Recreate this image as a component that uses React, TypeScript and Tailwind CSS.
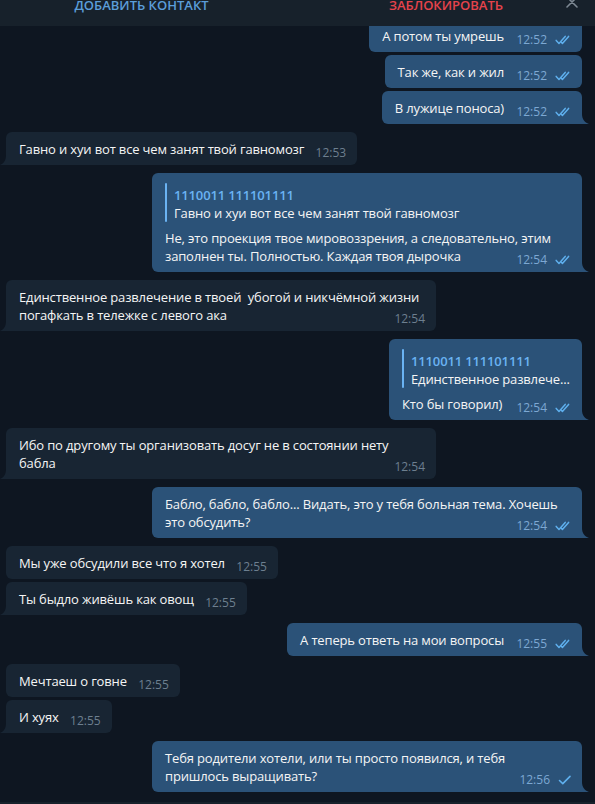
import React from "react";
import clsx from "clsx";

type Msg = {
  out: boolean;
  lines: string[];
  time: string;
  gap: string;
  tail?: boolean;
  width?: string;
  reply?: { name: string; text: string };
  single?: boolean;
};

const messages: Msg[] = [
  { out: true, lines: ["А потом ты умрешь"], time: "12:52", gap: "-mt-[7px]" },
  { out: true, lines: ["Так же, как и жил"], time: "12:52", gap: "mt-[3px]" },
  { out: true, lines: ["В лужице поноса)"], time: "12:52", gap: "mt-[3px]", tail: true },
  {
    out: false,
    lines: ["Гавно и хуи вот все чем занят твой гавномозг"],
    time: "12:53",
    gap: "mt-[8px]",
    tail: true,
  },
  {
    out: true,
    lines: [
      "Не, это проекция твое мировоззрения, а следовательно, этим",
      "заполнен ты. Полностью. Каждая твоя дырочка",
    ],
    time: "12:54",
    gap: "mt-[8px]",
    tail: true,
    width: "w-[430px]",
    reply: { name: "1110011 111101111", text: "Гавно и хуи вот все чем занят твой гавномозг" },
  },
  {
    out: false,
    lines: [
      "Единственное развлечение в твоей\u00a0 убогой и никчёмной жизни",
      "погафкать в тележке с левого ака",
    ],
    time: "12:54",
    gap: "mt-[8px]",
    tail: true,
    width: "w-[430px]",
  },
  {
    out: true,
    lines: ["Кто бы говорил)"],
    time: "12:54",
    gap: "mt-[8px]",
    tail: true,
    width: "w-[193px]",
    reply: { name: "1110011 111101111", text: "Единственное развлече..." },
  },
  {
    out: false,
    lines: ["Ибо по другому ты организовать досуг не в состоянии нету", "бабла"],
    time: "12:54",
    gap: "mt-[8px]",
    tail: true,
    width: "w-[430px]",
  },
  {
    out: true,
    lines: ["Бабло, бабло, бабло... Видать, это у тебя больная тема. Хочешь", "это обсудить?"],
    time: "12:54",
    gap: "mt-[8px]",
    tail: true,
    width: "w-[430px]",
  },
  { out: false, lines: ["Мы уже обсудили все что я хотел"], time: "12:55", gap: "mt-[8px]" },
  { out: false, lines: ["Ты быдло живёшь как овощ"], time: "12:55", gap: "mt-[3px]", tail: true },
  { out: true, lines: ["А теперь ответь на мои вопросы"], time: "12:55", gap: "mt-[8px]", tail: true },
  { out: false, lines: ["Мечтаеш о говне"], time: "12:55", gap: "mt-[8px]" },
  { out: false, lines: ["И хуях"], time: "12:55", gap: "mt-[3px]", tail: true },
  {
    out: true,
    lines: ["Тебя родители хотели, или ты просто появился, и тебя", "пришлось выращивать?"],
    time: "12:56",
    gap: "mt-[8px]",
    tail: true,
    width: "w-[430px]",
    single: true,
  },
];

function Checks({ single }: { single?: boolean }) {
  if (single) {
    return (
      <svg width="14" height="10" viewBox="0 0 14 10" fill="none">
        <path
          d="M1.5 5.5 L4.8 8.6 L12 1.4"
          stroke="#5fb0ee"
          strokeWidth="1.6"
          strokeLinecap="round"
          strokeLinejoin="round"
        />
      </svg>
    );
  }
  return (
    <svg width="17" height="10" viewBox="0 0 17 10" fill="none">
      <path
        d="M1.2 5.4 L4 8.4 L10.2 1.4"
        stroke="#5fb0ee"
        strokeWidth="1.5"
        strokeLinecap="round"
        strokeLinejoin="round"
      />
      <path
        d="M6.4 7.2 L7.4 8.4 L13.6 1.4"
        stroke="#5fb0ee"
        strokeWidth="1.5"
        strokeLinecap="round"
        strokeLinejoin="round"
      />
    </svg>
  );
}

function Tail({ out }: { out: boolean }) {
  if (out) {
    return (
      <svg
        className="absolute bottom-0 -right-[7px]"
        width="7"
        height="10"
        viewBox="0 0 7 10"
      >
        <path d="M0 0 C0 5 2.5 8.6 7 10 L0 10 Z" fill="#2b5278" />
      </svg>
    );
  }
  return (
    <svg className="absolute bottom-0 -left-[6px]" width="6" height="10" viewBox="0 0 6 10">
      <path d="M6 0 C6 5 4 8.6 0 10 L6 10 Z" fill="#182533" />
    </svg>
  );
}

function Bubble({ m }: { m: Msg }) {
  return (
    <div className={clsx("flex", m.out ? "justify-end pr-[13px]" : "justify-start pl-[6px]", m.gap)}>
      <div
        className={clsx(
          "relative pl-[13px] pr-[11px] pt-[8px] pb-[7px] text-[13px] leading-[18px] tracking-[-0.15px] text-[#f5f5f5]",
          m.out ? "bg-[#2b5278]" : "bg-[#182533]",
          m.tail
            ? m.out
              ? "rounded-[6px] rounded-br-none"
              : "rounded-[6px] rounded-bl-none"
            : "rounded-[6px]",
          m.width
        )}
      >
        {m.reply && (
          <div className="flex mt-[2px] mb-[7px]">
            <div className="w-[2px] shrink-0 rounded-sm bg-[#6ab3f3]" />
            <div className="pl-[7px] pt-[3px] whitespace-nowrap">
              <div className="font-semibold text-[#6ab3f3]">{m.reply.name}</div>
              <div>{m.reply.text}</div>
            </div>
          </div>
        )}
        <div className="whitespace-nowrap">
          {m.lines.map((l, i) => (
            <React.Fragment key={i}>
              {i > 0 && <br />}
              {l}
            </React.Fragment>
          ))}
          <span className={m.out ? "inline-block w-[67px]" : "inline-block w-[42px]"} />
        </div>
        <div
          className={clsx(
            "absolute bottom-[5px] flex items-center gap-[8px] text-[12px] leading-[14px] tracking-normal",
            m.out ? "right-[10px] text-[#7da8d3]" : "right-[11px] text-[#6d7f8f]"
          )}
        >
          <span>{m.time}</span>
          {m.out && <Checks single={m.single} />}
        </div>
        {m.tail && <Tail out={m.out} />}
      </div>
    </div>
  );
}

export default function App() {
  return (
    <div
      className="w-[595px] h-[804px] overflow-hidden bg-[#0e1621] flex flex-col"
      style={{ fontFamily: '"Open Sans", "Noto Sans", sans-serif' }}
    >
      <div className="relative z-10 h-[26px] shrink-0 bg-[#17212b] flex items-start overflow-hidden text-[13px] font-semibold leading-[18px]">
        <div className="-mt-[4px] w-[283px] text-center text-[#5b9dd9]">ДОБАВИТЬ КОНТАКТ</div>
        <div className="-mt-[4px] ml-[57px] w-[212px] text-center text-[#e5434b]">ЗАБЛОКИРОВАТЬ</div>
        <svg className="ml-[14px] -mt-[4px]" width="12" height="12" viewBox="0 0 12 12">
          <path d="M1 1 L11 11 M11 1 L1 11" stroke="#7d8893" strokeWidth="1.6" strokeLinecap="round" />
        </svg>
      </div>
      <div className="flex flex-col">
        {messages.map((m, i) => (
          <Bubble key={i} m={m} />
        ))}
      </div>
      <div className="mt-auto h-[2px] bg-[#17212b]" />
    </div>
  );
}
